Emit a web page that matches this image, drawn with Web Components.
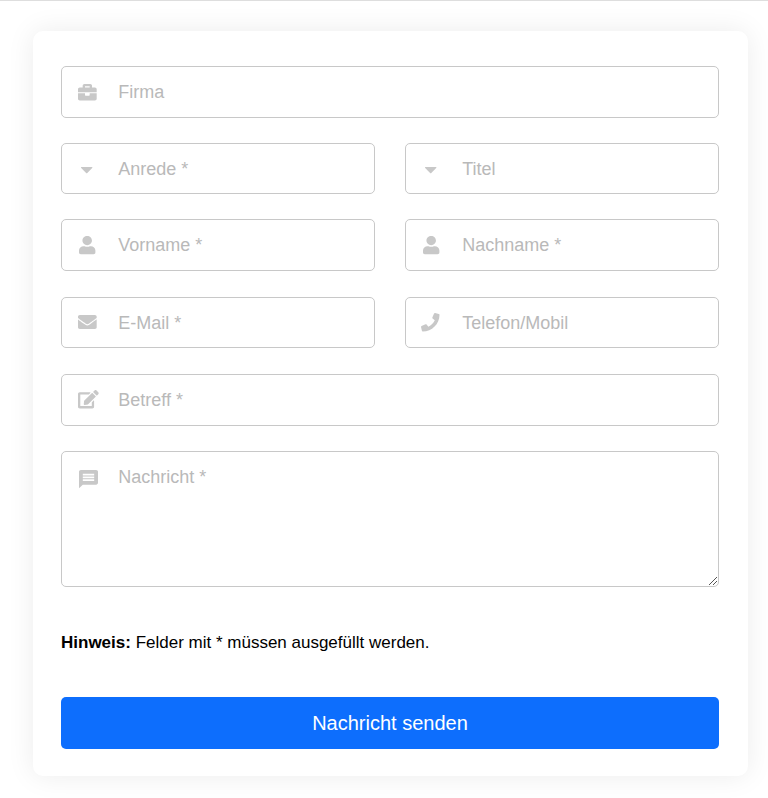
<!DOCTYPE html>
<html lang="de">
<head>
<meta charset="utf-8">
<title>Kontakt</title>
<style>
    body {
        margin: 0;
        background: #fff;
        color: #000;
        font-family: "Liberation Sans", Arial, sans-serif;
    }
</style>
</head>
<body>
<contact-card>
    <form-row style="--h: 52px">
        <form-field icon="briefcase">Firma</form-field>
    </form-row>
    <form-row style="--h: 51px">
        <form-field icon="caret">Anrede *</form-field>
        <form-field icon="caret">Titel</form-field>
    </form-row>
    <form-row style="--h: 52px">
        <form-field icon="user">Vorname *</form-field>
        <form-field icon="user">Nachname *</form-field>
    </form-row>
    <form-row style="--h: 51px; --space: 26px">
        <form-field icon="envelope">E-Mail *</form-field>
        <form-field icon="phone">Telefon/Mobil</form-field>
    </form-row>
    <form-row style="--h: 52px; --space: 26px">
        <form-field icon="edit">Betreff *</form-field>
    </form-row>
    <form-row style="--h: 136px">
        <form-field icon="message" multiline>Nachricht *</form-field>
    </form-row>
    <form-hint><b>Hinweis:</b> Felder mit * müssen ausgefüllt werden.</form-hint>
    <submit-button>Nachricht senden</submit-button>
</contact-card>

<script>
const icons = {
    briefcase: { w: 18.7, h: 16.4, x: 16, y: 17, box: '0 32 512 448', d: 'M320 336c0 8.84-7.16 16-16 16h-96c-8.84 0-16-7.16-16-16v-48H0v144c0 25.6 22.4 48 48 48h416c25.6 0 48-22.4 48-48V288H320v48zm144-208h-80V80c0-25.6-22.4-48-48-48H176c-25.6 0-48 22.4-48 48v48H48c-25.6 0-48 22.4-48 48v80h512v-80c0-25.6-22.4-48-48-48zm-144 0H192V96h128v32z' },
    caret: { w: 11.4, h: 6.2, x: 18.6, y: 22.7, box: '0 0 112 60', d: 'M6 0h100c6 0 8 5 4 9L62 57c-4 4-8 4-12 0L2 9C-2 5 0 0 6 0z' },
    user: { w: 16.4, h: 18.2, x: 16.5, y: 16, box: '0 0 448 512', d: 'M224 260c72 0 130-58 130-130S296 0 224 0 94 58 94 130s58 130 130 130zm100 28h-27c-22.200 10.200-46.900 16-72.900 16s-50.600-5.800-72.900-16h-27C56 288 0 340 0 410V464c0 26.500 21.500 48 48 48h352c26.500 0 48-21.500 48-48v-54c0-70-56-122-124-122z' },
    envelope: { w: 18.7, h: 14, x: 15.6, y: 17.1, box: '0 64 512 384', d: 'M502.3 190.8c3.9-3.1 9.7-.2 9.7 4.7V400c0 26.5-21.5 48-48 48H48c-26.5 0-48-21.5-48-48V195.6c0-5 5.7-7.8 9.7-4.7 22.4 17.4 52.1 39.5 154.1 113.6 21.1 15.4 56.7 47.8 92.2 47.6 35.7.3 72-32.8 92.3-47.6 102-74.1 131.6-96.3 154-113.7zM256 320c23.2.4 56.6-29.2 73.4-41.4 132.7-96.3 142.8-104.7 173.4-128.7 5.8-4.5 9.2-11.5 9.2-18.9v-19c0-26.5-21.5-48-48-48H48c-26.5 0-48 21.5-48 48v19c0 7.4 3.4 14.3 9.2 18.9 30.6 23.9 40.7 32.4 173.4 128.7 16.8 12.2 50.2 41.8 73.4 41.4z' },
    phone: { w: 18.5, h: 18.5, x: 15, y: 15.2, box: '0 0 512 512', d: 'M493.4 24.6l-104-24c-11.3-2.6-22.9 3.3-27.5 13.9l-48 112c-4.2 9.8-1.4 21.3 6.9 28l60.6 49.6c-36 76.7-98.9 140.5-177.2 177.2l-49.6-60.6c-6.8-8.3-18.2-11.1-28-6.9l-112 48C3.9 366.5-2 378.1.6 389.4l24 104C27.1 504.2 36.7 512 48 512c256.1 0 464-207.5 464-464 0-11.2-7.7-20.9-18.6-23.4z' },
    edit: { w: 20.7, h: 18.4, x: 16, y: 15, box: '0 0 576 512', d: 'M402.6 83.2l90.2 90.2c3.8 3.8 3.8 10 0 13.8L274.4 405.6l-92.8 10.3c-12.4 1.4-22.9-9.1-21.5-21.5l10.3-92.8L388.8 83.2c3.8-3.8 10-3.8 13.8 0zm162-22.9l-48.8-48.8c-15.2-15.2-39.9-15.2-55.2 0l-35.4 35.4c-3.8 3.8-3.8 10 0 13.8l90.2 90.2c3.8 3.8 10 3.8 13.8 0l35.4-35.4c15.2-15.3 15.2-40 0-55.2zM384 346.2V448H64V128h229.800c3.2 0 6.2-1.3 8.5-3.5l40-40c7.6-7.6 2.2-20.5-8.5-20.5H48C21.5 64 0 85.5 0 112v352c0 26.5 21.5 48 48 48h352c26.5 0 48-21.5 48-48V306.2c0-10.7-12.9-16-20.5-8.5l-40 40c-2.2 2.3-3.5 5.3-3.5 8.5z' },
    message: { w: 19, h: 18.3, x: 17, y: 17.8, box: '2 2 20 20', d: 'M20 2H4c-1.1 0-1.99.9-1.99 2L2 22l4-4h14c1.1 0 2-.9 2-2V4c0-1.1-.9-2-2-2zm-2 12H6v-2h12v2zm0-3H6V9h12v2zm0-3H6V6h12v2z' }
};

const cardTemplate = document.createElement('template');

cardTemplate.innerHTML = `
    <style>
        :host { display: block; border-top: 1px solid #dedede; padding: 30px 20px 22px 33px; }
        .card {
            box-sizing: border-box;
            height: 745px;
            padding: 35px 29px 27px 28px;
            border-radius: 10px;
            background: #fff;
            box-shadow: 0 0 28px rgba(0, 0, 0, .08);
        }
    </style>
    <div class="card"><slot></slot></div>
    `;

class ContactCard extends HTMLElement {
    constructor() {
        super();
        this.attachShadow({ mode: 'open' });
        this.shadowRoot.appendChild(cardTemplate.content.cloneNode(true));
    }
}

class FormRow extends HTMLElement {
    constructor() {
        super();
        this.attachShadow({ mode: 'open' });
        this.shadowRoot.innerHTML = `
            <style>
                :host { display: flex; gap: 30px; height: var(--h); margin-top: var(--space, 25px); }
                :host(:first-child) { margin-top: 0; }
            </style>
            <slot></slot>
        `;
    }
}

// two diagonals of single pixels, like the native textarea handle
function gripMarkup() {
    let d = '';
    for (let i = 0; i < 8; i++) d += `M${i} ${7 - i}h1v1h-1z`;
    for (let i = 4; i < 8; i++) d += `M${i} ${11 - i}h1v1h-1z`;
    return `<svg class="grip" width="8" height="8" viewBox="0 0 8 8"><path d="${d}" fill="#555"/></svg>`;
}

class FormField extends HTMLElement {
    constructor() {
        super();
        this.attachShadow({ mode: 'open' });
    }

    connectedCallback() {
        const icon = icons[this.getAttribute('icon')];

        this.shadowRoot.innerHTML = `
            <style>
                :host {
                    display: flex;
                    flex: 1;
                    box-sizing: border-box;
                    position: relative;
                    border: 1px solid #c8c8c8;
                    border-radius: 5px;
                    color: #b9b9b9;
                    font-size: 18px;
                    line-height: 50px;
                    cursor: text;
                }
                .icon { box-sizing: border-box; width: 56.2px; flex: none; padding: ${icon.y}px 0 0 ${icon.x}px; line-height: 0; }
                .icon svg { fill: #c8c8c8; display: block; overflow: visible; }
                .grip { position: absolute; right: 1px; bottom: 1px; }
            </style>
            <div class="icon"><svg width="${icon.w}" height="${icon.h}" viewBox="${icon.box}" preserveAspectRatio="none"><path d="${icon.d}"/></svg></div>
            <div><slot></slot></div>
            ${this.hasAttribute('multiline') ? gripMarkup() : ''}
        `;
    }
}

class FormHint extends HTMLElement {
    constructor() {
        super();
        this.attachShadow({ mode: 'open' });
        this.shadowRoot.innerHTML = `
            <style>
                :host { display: block; margin: 44px 0 42px; font-size: 17px; line-height: 24px; }
            </style>
            <slot></slot>
        `;
    }
}

class SubmitButton extends HTMLElement {
    constructor() {
        super();
        this.attachShadow({ mode: 'open' });
        this.shadowRoot.innerHTML = `
            <style>
                :host { display: block; }
                button {
                    display: block;
                    width: 100%;
                    height: 52px;
                    padding: 0;
                    border: 0;
                    border-radius: 5px;
                    background: #0d6efd;
                    color: #fff;
                    font: 20px/52px "Liberation Sans", Arial, sans-serif;
                    cursor: pointer;
                }
            </style>
            <button type="button"><slot></slot></button>
        `;
    }
}

customElements.define('contact-card', ContactCard);
customElements.define('form-row', FormRow);
customElements.define('form-field', FormField);
customElements.define('form-hint', FormHint);
customElements.define('submit-button', SubmitButton);
</script>
</body>
</html>
